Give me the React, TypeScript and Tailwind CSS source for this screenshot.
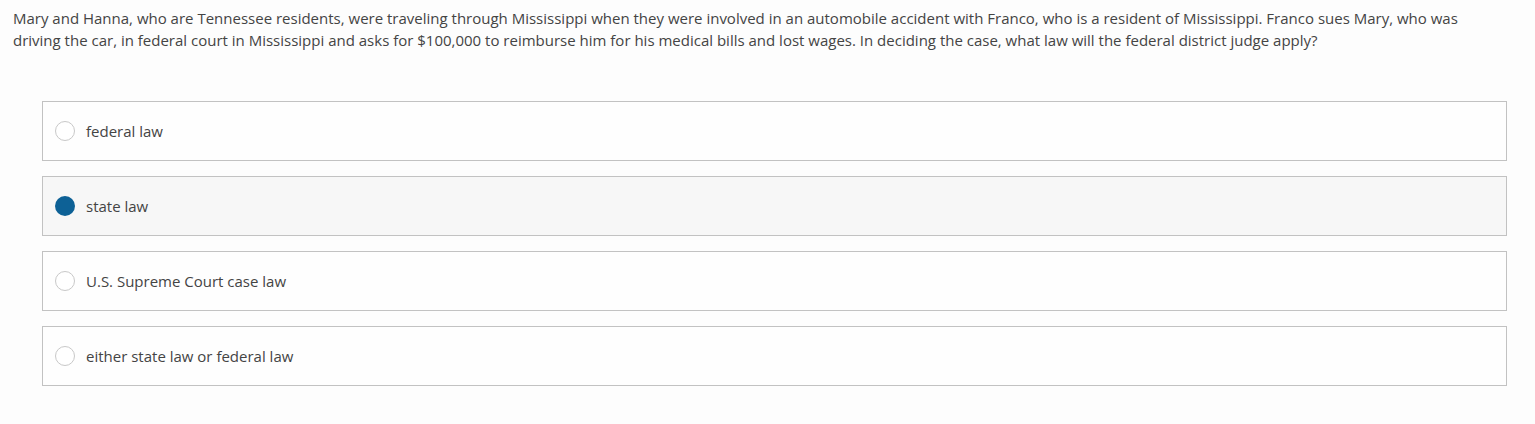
const options = [
  'federal law',
  'state law',
  'U.S. Supreme Court case law',
  'either state law or federal law',
]

export default function App() {
  const selected = 1
  return (
    <div className="min-h-[424px] w-full bg-[#fdfdfd] px-[13px] pt-[7px] font-['Open_Sans',sans-serif] text-[15px] leading-[22px] text-[#444]">
      <p className="pr-[50px]">
        Mary and Hanna, who are Tennessee residents, were traveling through Mississippi when they were involved in an automobile accident with Franco, who is a resident of Mississippi. Franco sues Mary, who was driving the car, in federal court in Mississippi and asks for $100,000 to reimburse him for his medical bills and lost wages. In deciding the case, what law will the federal district judge apply?
      </p>
      <div className="ml-[29px] mr-[15px] mt-[50px] flex flex-col gap-[15px]">
        {options.map((o, i) => (
          <label
            key={o}
            className={`flex h-[60px] items-center border border-[#c2c2c2] pl-[12px] ${i === selected ? 'bg-[#f7f7f7]' : 'bg-[#fefefe]'}`}
          >
            <span
              className={`h-[20px] w-[20px] shrink-0 rounded-full ${i === selected ? 'bg-[#0d6196]' : 'border border-[#c8c8c8] bg-white'}`}
            />
            <span className="ml-[11px]">{o}</span>
          </label>
        ))}
      </div>
    </div>
  )
}
